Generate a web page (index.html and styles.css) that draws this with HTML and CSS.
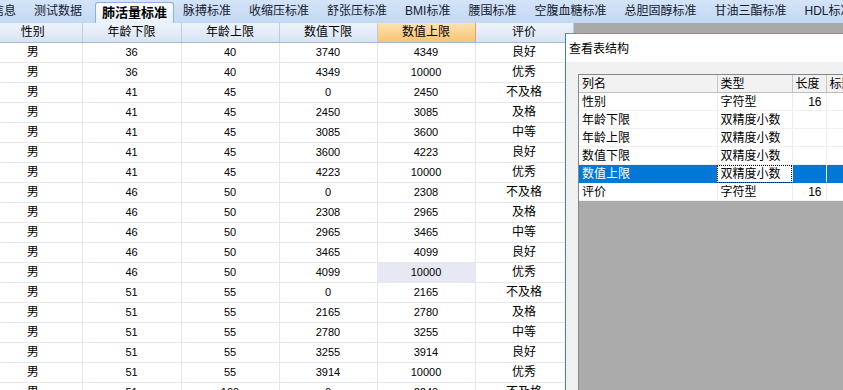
FILE: index.html
```html
<!DOCTYPE html>
<html lang="zh-CN">
<head>
    <meta charset="UTF-8">
    <title>肺活量标准</title>
    <link rel="stylesheet" href="styles.css">
</head>
<body>
    <div class="tabs">
        <div class="tab">信息</div>
        <div class="tab">测试数据</div>
        <div class="tab active">肺活量标准</div>
        <div class="tab">脉搏标准</div>
        <div class="tab">收缩压标准</div>
        <div class="tab">舒张压标准</div>
        <div class="tab">BMI标准</div>
        <div class="tab">腰围标准</div>
        <div class="tab">空腹血糖标准</div>
        <div class="tab">总胆固醇标准</div>
        <div class="tab">甘油三酯标准</div>
        <div class="tab">HDL标准</div>
    </div>

    <div class="workspace">
        <table class="grid">
            <colgroup>
                <col style="width:98px"><col style="width:99px"><col style="width:98px">
                <col style="width:98px"><col style="width:98px"><col style="width:98px">
            </colgroup>
            <thead>
                <tr>
                    <th>性别</th><th>年龄下限</th><th>年龄上限</th><th>数值下限</th><th class="sorted">数值上限</th><th>评价</th>
                </tr>
            </thead>
            <tbody>
                <tr><td>男</td><td class="num">36</td><td class="num">40</td><td class="num">3740</td><td class="num">4349</td><td>良好</td></tr>
                <tr><td>男</td><td class="num">36</td><td class="num">40</td><td class="num">4349</td><td class="num">10000</td><td>优秀</td></tr>
                <tr><td>男</td><td class="num">41</td><td class="num">45</td><td class="num">0</td><td class="num">2450</td><td>不及格</td></tr>
                <tr><td>男</td><td class="num">41</td><td class="num">45</td><td class="num">2450</td><td class="num">3085</td><td>及格</td></tr>
                <tr><td>男</td><td class="num">41</td><td class="num">45</td><td class="num">3085</td><td class="num">3600</td><td>中等</td></tr>
                <tr><td>男</td><td class="num">41</td><td class="num">45</td><td class="num">3600</td><td class="num">4223</td><td>良好</td></tr>
                <tr><td>男</td><td class="num">41</td><td class="num">45</td><td class="num">4223</td><td class="num">10000</td><td>优秀</td></tr>
                <tr><td>男</td><td class="num">46</td><td class="num">50</td><td class="num">0</td><td class="num">2308</td><td>不及格</td></tr>
                <tr><td>男</td><td class="num">46</td><td class="num">50</td><td class="num">2308</td><td class="num">2965</td><td>及格</td></tr>
                <tr><td>男</td><td class="num">46</td><td class="num">50</td><td class="num">2965</td><td class="num">3465</td><td>中等</td></tr>
                <tr><td>男</td><td class="num">46</td><td class="num">50</td><td class="num">3465</td><td class="num">4099</td><td>良好</td></tr>
                <tr><td>男</td><td class="num">46</td><td class="num">50</td><td class="num">4099</td><td class="num current">10000</td><td>优秀</td></tr>
                <tr><td>男</td><td class="num">51</td><td class="num">55</td><td class="num">0</td><td class="num">2165</td><td>不及格</td></tr>
                <tr><td>男</td><td class="num">51</td><td class="num">55</td><td class="num">2165</td><td class="num">2780</td><td>及格</td></tr>
                <tr><td>男</td><td class="num">51</td><td class="num">55</td><td class="num">2780</td><td class="num">3255</td><td>中等</td></tr>
                <tr><td>男</td><td class="num">51</td><td class="num">55</td><td class="num">3255</td><td class="num">3914</td><td>良好</td></tr>
                <tr><td>男</td><td class="num">51</td><td class="num">55</td><td class="num">3914</td><td class="num">10000</td><td>优秀</td></tr>
                <tr><td>男</td><td class="num">51</td><td class="num">100</td><td class="num">0</td><td class="num">2240</td><td>不及格</td></tr>
            </tbody>
        </table>
        <div class="mdi"></div>

        <div class="dialog">
            <div class="dialog-title">查看表结构</div>
            <div class="dialog-body">
                <div class="fields">
                    <table class="field-table">
                        <colgroup>
                            <col style="width:138px"><col style="width:75px"><col style="width:34px"><col style="width:60px">
                        </colgroup>
                        <thead>
                            <tr><th>列名</th><th>类型</th><th>长度</th><th>标题</th></tr>
                        </thead>
                        <tbody>
                            <tr><td>性别</td><td>字符型</td><td class="len">16</td><td></td></tr>
                            <tr><td>年龄下限</td><td>双精度小数</td><td class="len"></td><td></td></tr>
                            <tr><td>年龄上限</td><td>双精度小数</td><td class="len"></td><td></td></tr>
                            <tr><td>数值下限</td><td>双精度小数</td><td class="len"></td><td></td></tr>
                            <tr class="selected"><td>数值上限</td><td class="focus">双精度小数</td><td class="len"></td><td></td></tr>
                            <tr><td>评价</td><td>字符型</td><td class="len">16</td><td></td></tr>
                        </tbody>
                    </table>
                </div>
            </div>
        </div>
    </div>
</body>
</html>
```

FILE: styles.css
```css
body {
    margin: 0;
    width: 843px;
    height: 390px;
    overflow: hidden;
    background: #fff;
    color: #000;
    font-family: "Liberation Sans", "Noto Sans CJK SC", sans-serif;
    font-size: 12px;
}

/* tab strip */
.tabs {
    display: flex;
    height: 23px;
    margin-left: -17px;
    background: linear-gradient(#d4e4f8, #c3d8f2);
    white-space: nowrap;
}
.tab {
    flex: none;
    margin-top: 2px;
    height: 21px;
    line-height: 19px;
    padding: 0 9px;
    color: #15202e;
}
.tab.active {
    margin-left: 4px;
    padding: 0 6px;
    height: 20px;
    line-height: 19px;
    border: 1px solid #8eb0dc;
    border-bottom: none;
    border-radius: 3px 3px 0 0;
    background: linear-gradient(#fdfeff, #e7f0fb);
    font-size: 13px;
    font-weight: bold;
    color: #000;
}

/* main area */
.workspace {
    position: relative;
    display: flex;
    height: 367px;
}
.grid {
    flex: none;
    width: 589px;
    margin-left: -16px;
    border-collapse: collapse;
    table-layout: fixed;
    align-self: flex-start;
}
.grid th {
    height: 19px;
    padding: 0;
    font-weight: normal;
    line-height: 19px;
    background: linear-gradient(#eef3fb, #d8e4f3);
    border-right: 1px solid #bccbdf;
    border-bottom: 1px solid #a7bbd5;
    color: #000;
}
.grid th.sorted {
    background: linear-gradient(#fce3b0, #f7c374);
    border-right-color: #e2a65a;
}
.grid td {
    height: 19px;
    padding: 0;
    line-height: 19px;
    text-align: center;
    border-right: 1px solid #e4e8ee;
    border-bottom: 1px solid #e4e8ee;
}
.grid td.num {
    font-size: 11px;
}
.grid td.current {
    background: #e6e9f3;
}
.mdi {
    flex: 1;
    background: #a9a9a9;
}

/* table structure window */
.dialog {
    position: absolute;
    left: 565px;
    top: 10px;
    width: 320px;
    height: 400px;
    border-left: 1px solid #3b7dd0;
    border-top: 1px solid #5a92d8;
    background: #f0f0f0;
}
.dialog-title {
    height: 28px;
    line-height: 30px;
    padding-left: 3px;
    background: #fff;
}
.dialog-body {
    padding: 12px 0 0 12px;
}
.fields {
    height: 340px;
    border: 1px solid #828790;
    border-right: none;
    background: #ababab;
}
.field-table {
    width: 307px;
    border-collapse: collapse;
    table-layout: fixed;
}
.field-table th {
    padding: 1px 0 0 3px;
    line-height: 16px;
    font-weight: normal;
    text-align: left;
    background: #f2f2f2;
    border-right: 1px solid #c6c6c6;
    border-bottom: 1px solid #bdbdbd;
    white-space: nowrap;
    overflow: hidden;
}
.field-table td {
    padding: 1px 0 0 3px;
    line-height: 16px;
    background: #fff;
    border-right: 1px solid #ececec;
    border-bottom: 1px solid #f0f0f0;
}
.field-table td.len {
    text-align: right;
    padding: 1px 4px 0 0;
}
.field-table tr.selected td {
    background: #0078d7;
    color: #fff;
    border-bottom-color: #0078d7;
}
.field-table tr.selected td.focus {
    background: #fff;
    color: #000;
    outline: 1px dotted #000;
    outline-offset: -1px;
}
```
